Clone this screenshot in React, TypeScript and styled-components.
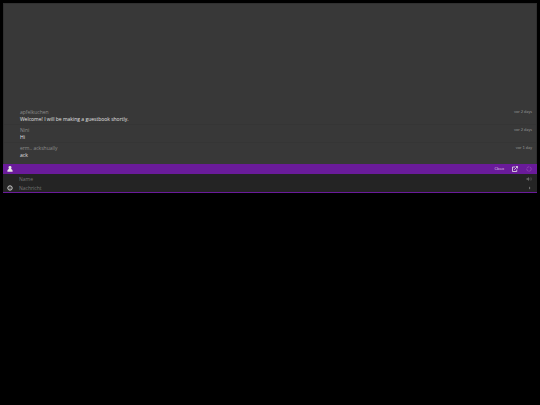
import React from "react";
import styled, { createGlobalStyle } from "styled-components";

const GlobalStyle = createGlobalStyle`
  * { box-sizing: border-box; }
  body {
    margin: 0;
    background: #000;
    font-family: "Open Sans", "Noto Sans", sans-serif;
    font-size: 5px;
  }
`;

const Chat = styled.main`
  margin: 3px;
  background: #383838;
`;

const Messages = styled.section`
  display: flex;
  flex-direction: column;
  justify-content: flex-end;
  min-height: 161px;
  padding-bottom: 4px;
  border: 1px solid #303030;
  border-bottom: 0;
`;

const Message = styled.article`
  display: grid;
  grid-template-columns: 1fr auto;
  padding: 2px 4px 1px 16px;
  border-top: 1px solid #353535;
  line-height: 7px;

  &:first-child { border-top-color: transparent; }
`;

const Author = styled.span`
  color: #8c8c8c;
`;

const When = styled.time`
  color: #949494;
  font-family: Lato, sans-serif;
  font-size: 4px;
  line-height: 6px;
`;

const Body = styled.p`
  grid-column: 1 / -1;
  margin: 0;
  color: #e0e0e0;
`;

const Toolbar = styled.nav`
  display: flex;
  align-items: center;
  justify-content: space-between;
  height: 10px;
  padding: 0 5px 0 4px;
  background: #6a1b9a;
`;

const Tools = styled.div`
  display: flex;
  align-items: center;
  gap: 8px;
`;

const IconButton = styled.button<{ $color?: string }>`
  display: flex;
  flex: none;
  padding: 0;
  border: 0;
  background: none;
  color: ${({ $color }) => $color ?? "#e8e8e8"};
`;

const BrandLink = styled.a`
  color: #e2cdee;
  font-size: 4px;
  line-height: 8px;
  text-decoration: none;
`;

const Form = styled.form`
  border-bottom: 1px solid #6a1b9a;
  background: #242424;
`;

const Field = styled.div`
  display: grid;
  grid-template-columns: 6px 1fr auto;
  align-items: center;
  column-gap: 6px;
  height: 9px;
  padding: 0 5px 0 4px;
`;

const TextInput = styled.input`
  grid-column: 2;
  width: 100%;
  min-width: 0;
  height: 8px;
  padding: 0;
  border: 0;
  outline: 0;
  background: none;
  color: #e2e2e2;
  font: inherit;

  &::placeholder { color: #757575; opacity: 1; }
`;

const messages = [
  { author: "apfelkuchen", text: "Welcome! I will be making a guestbook shortly.", when: "vor 2 days" },
  { author: "Nini", text: "Hi", when: "vor 2 days" },
  { author: "erm.. ackshually", text: "ack", when: "vor 1 day" },
];

const UserIcon = () => (
  <svg width="6" height="6" viewBox="0 0 12 12" fill="currentColor" aria-hidden="true">
    <path d="M6 0a3 3 0 0 1 3 3.200C9 4.600 8.500 5.500 8 6c2 .5 3.200 1.500 3.200 4v1.500H.8V10C.8 7.500 2 6.500 4 6 3.500 5.500 3 4.600 3 3.200A3 3 0 0 1 6 0z" />
  </svg>
);

const SmileyIcon = () => (
  <svg width="6" height="6" viewBox="0 0 12 12" fill="none" stroke="currentColor" aria-hidden="true">
    <circle cx="6" cy="6" r="4.400" strokeWidth="2" />
    <path d="M4 4.200h1M7 4.200h1M4 7.500q2 1.500 4 0" strokeWidth="1" />
  </svg>
);

const PopOutIcon = () => (
  <svg width="6" height="6" viewBox="0 0 12 12" fill="none" stroke="currentColor" strokeWidth="1.600" aria-hidden="true">
    <path d="M6 2H1v9h8.500V7M4.500 7.500 11 1M7.500 1H11v4" />
  </svg>
);

const RefreshIcon = () => (
  <svg width="6" height="6" viewBox="0 0 12 12" fill="none" stroke="currentColor" strokeWidth="1.300" aria-hidden="true">
    <circle cx="6" cy="6" r="4.500" strokeDasharray="6 1" />
  </svg>
);

const SoundIcon = () => (
  <svg width="6" height="6" viewBox="0 0 12 12" fill="currentColor" aria-hidden="true">
    <path d="M1 4.500h2L6 2v8L3 7.500H1z" />
    <path d="M7.500 4q1.500 2 0 4M9.500 2.500q3 3.500 0 7" fill="none" stroke="currentColor" />
  </svg>
);

const SendIcon = () => (
  <svg width="4" height="4" viewBox="0 0 8 8" fill="currentColor" aria-hidden="true">
    <path d="M2 1l3 3-3 3z" />
  </svg>
);

export default function App() {
  return (
    <>
      <GlobalStyle />
      <Chat>
        <Messages>
          {messages.map((m) => (
            <Message key={m.author}>
              <Author>{m.author}</Author>
              <When>{m.when}</When>
              <Body>{m.text}</Body>
            </Message>
          ))}
        </Messages>
        <Toolbar>
          <IconButton type="button" aria-label="Profil"><UserIcon /></IconButton>
          <Tools>
            <BrandLink href="#cbox">Cbox</BrandLink>
            <IconButton type="button" aria-label="Pop-out"><PopOutIcon /></IconButton>
            <IconButton type="button" aria-label="Aktualisieren" $color="#9a50b8"><RefreshIcon /></IconButton>
          </Tools>
        </Toolbar>
        <Form onSubmit={(e) => e.preventDefault()}>
          <Field>
            <TextInput aria-label="Name" placeholder="Name" />
            <IconButton type="button" aria-label="Ton" $color="#666"><SoundIcon /></IconButton>
          </Field>
          <Field>
            <IconButton type="button" aria-label="Smileys" $color="#d0d0d0"><SmileyIcon /></IconButton>
            <TextInput aria-label="Nachricht" placeholder="Nachricht" />
            <IconButton type="submit" aria-label="Senden" $color="#777"><SendIcon /></IconButton>
          </Field>
        </Form>
      </Chat>
    </>
  );
}
